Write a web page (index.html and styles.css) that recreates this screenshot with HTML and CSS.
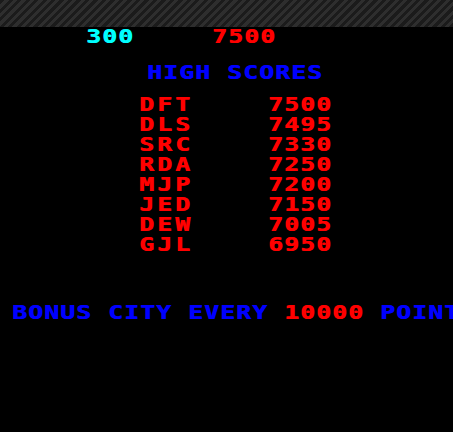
FILE: index.html
```html
<!DOCTYPE html>
<html>
<head>
<meta charset="utf-8">
<link rel="stylesheet" href="styles.css">
</head>
<body>
<div class="screen">
  <div class="stripe"></div>
  <div class="content">
    <div class="scores"><span class="p1">300</span><span class="hi">7500</span></div>
    <div class="title">HIGH SCORES</div>
    <div class="table">
      <span class="name">DFT</span><span class="pts">7500</span>
      <span class="name">DLS</span><span class="pts">7495</span>
      <span class="name">SRC</span><span class="pts">7330</span>
      <span class="name">RDA</span><span class="pts">7250</span>
      <span class="name">MJP</span><span class="pts">7200</span>
      <span class="name">JED</span><span class="pts">7150</span>
      <span class="name">DEW</span><span class="pts">7005</span>
      <span class="name">GJL</span><span class="pts">6950</span>
    </div>
    <div class="bonus">BONUS CITY EVERY <span class="red">10000</span> POINTS</div>
  </div>
</div>
</body>
</html>
```
FILE: styles.css
```css
html, body {
  margin: 0;
  padding: 0;
  background: #000;
}
.screen {
  width: 453px;
  height: 432px;
  overflow: hidden;
  background: #000;
  font-family: "DejaVu Sans Mono", monospace;
  font-weight: bold;
  font-size: 19px;
  line-height: 16px;
  letter-spacing: 0.87px;
  white-space: nowrap;
}
.stripe {
  height: 27px;
  background: repeating-linear-gradient(-45deg, #1b1b1b 0px, #1b1b1b 3px, #2e2e2e 3px, #2e2e2e 6px);
}
.content {
  width: 349px;
  transform: scaleX(1.3);
  transform-origin: 0 0;
}
.content span, .content div {
  text-shadow: 0.6px 0 0 currentColor;
}
.scores {
  margin-top: 1px;
  padding-left: 66.2px;
  display: flex;
  gap: 60px;
}
.p1 { color: #00ffff; }
.hi { color: #ff0000; }
.title {
  margin-top: 20px;
  padding-left: 113.1px;
  color: #0000ff;
}
.table {
  margin-top: 16px;
  padding-left: 106.9px;
  display: grid;
  grid-template-columns: 99.2px auto;
  row-gap: 4px;
  color: #ff0000;
}
.name {
  letter-spacing: 2.4px;
}
.bonus {
  margin-top: 52px;
  padding-left: 9.2px;
  color: #0000ff;
}
.red { color: #ff0000; }
```
